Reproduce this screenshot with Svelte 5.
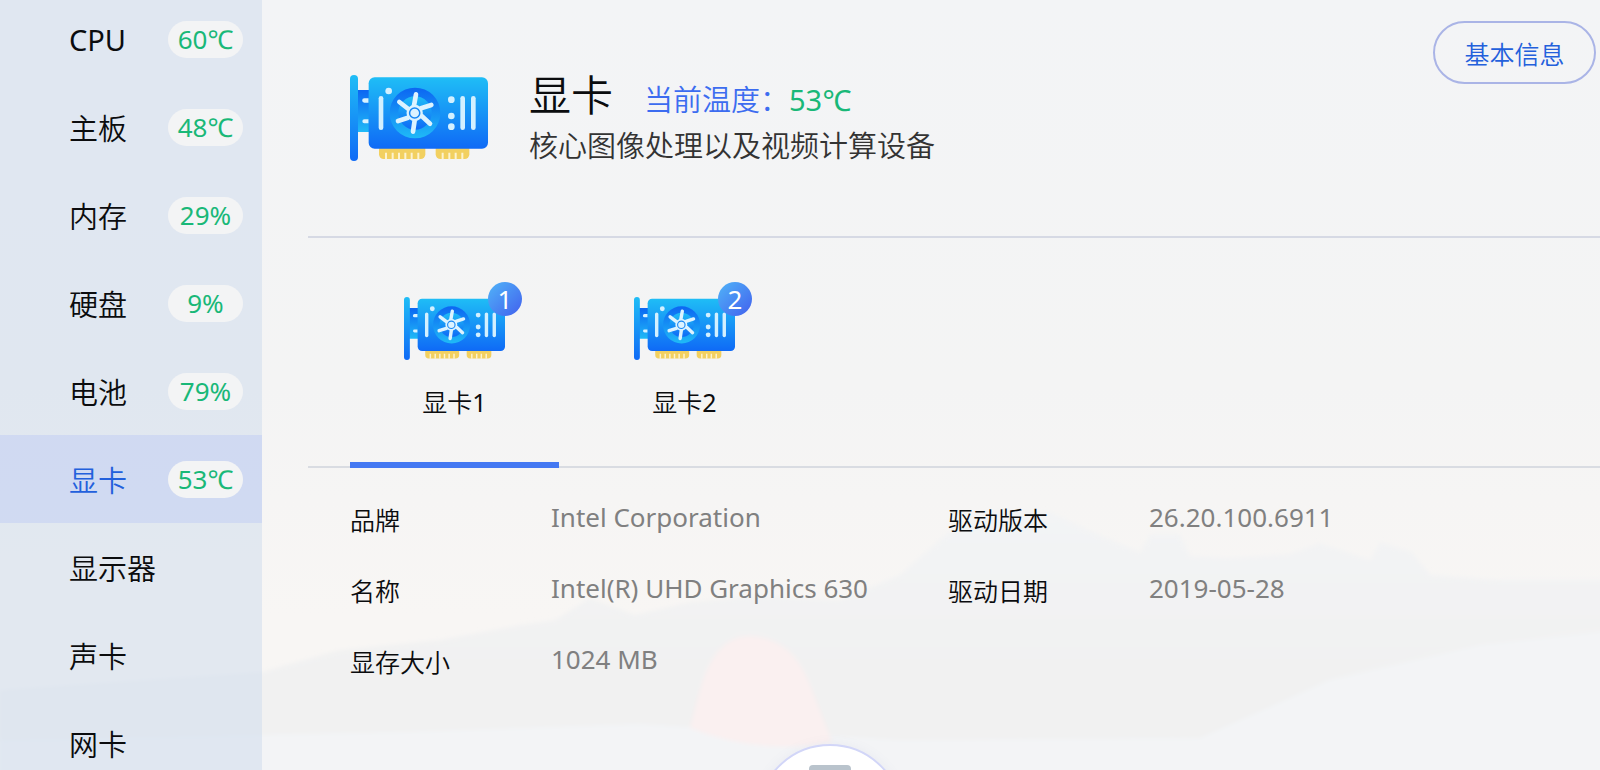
<script lang="ts">
  type Part = { name: string; reading?: string };

  const parts: Part[] = [
    { name: 'CPU', reading: '60℃' },
    { name: '主板', reading: '48℃' },
    { name: '内存', reading: '29%' },
    { name: '硬盘', reading: '9%' },
    { name: '电池', reading: '79%' },
    { name: '显卡', reading: '53℃' },
    { name: '显示器' },
    { name: '声卡' },
    { name: '网卡' },
  ];

  const cards = [1, 2];

  const details = [
    { label: '品牌', value: 'Intel Corporation' },
    { label: '驱动版本', value: '26.20.100.6911' },
    { label: '名称', value: 'Intel(R) UHD Graphics 630' },
    { label: '驱动日期', value: '2019-05-28' },
    { label: '显存大小', value: '1024 MB' },
  ];

  let activePart = $state('显卡');
  let activeCard = $state(1);

  // the light weight is too thin for latin text
  const isLatin = (text: string) => /^\w+$/.test(text);
</script>

{#snippet cardIcon(id: string)}
  <svg class="card-icon" viewBox="30 45 414 258" aria-hidden="true">
    <defs>
      <linearGradient id="{id}-body" x1="0" y1="0" x2="0" y2="1">
        <stop offset="0" stop-color="#1fbdf6" />
        <stop offset="1" stop-color="#0f6af6" />
      </linearGradient>
      <linearGradient id="{id}-deep" x1="0" y1="0" x2="0" y2="1">
        <stop offset="0" stop-color="#0c66f2" />
        <stop offset="1" stop-color="#1fbaf7" />
      </linearGradient>
    </defs>
    <rect x="50" y="90" width="44" height="126" fill="url(#{id}-deep)" />
    <path d="M86 115h-13a6.500 6.500 0 0 0 0 13h13zM86 178h-13a6 6 0 0 0 0 12h13z" fill="#d8f2ff" />
    <rect x="30" y="45" width="24" height="258" rx="12" fill="url(#{id}-body)" />
    <path d="M117 262h139v21a14 14 0 0 1-14 14H131a14 14 0 0 1-14-14z" fill="#f2d060" />
    <path d="M287 262h101v21a14 14 0 0 1-14 14h-73a14 14 0 0 1-14-14z" fill="#f2d060" />
    <path
      d="M138 278v20M158 278v20M177 278v20M196 278v20M215 278v20M235 278v20M308 278v20M328 278v20M347 278v20M367 278v20"
      stroke="#fdf3cf"
      stroke-width="6"
    />
    <rect x="86" y="52" width="358" height="214" rx="18" fill="url(#{id}-body)" />
    <g fill="#d3f0ff">
      <rect x="116" y="108" width="14" height="102" rx="7" />
      <rect x="361" y="108" width="14" height="102" rx="7" />
      <rect x="393" y="108" width="14" height="102" rx="7" />
      <circle cx="146" cy="93" r="10" />
      <circle cx="334" cy="119" r="10" />
      <circle cx="334" cy="168" r="10" />
      <circle cx="334" cy="200" r="10" />
    </g>
    <circle cx="225" cy="159" r="76" fill="url(#{id}-deep)" />
    <circle cx="225" cy="159" r="50" fill="url(#{id}-body)" />
    <path
      d="M222 137l6-34M243 145l31-10M246 169l24 22M224 181l-5 34M204 173l-30 10M205 147l-27-21"
      stroke="#ddf3ff"
      stroke-width="14"
      stroke-linecap="round"
    />
    <circle cx="224" cy="159" r="21" fill="#1787f5" stroke="#ddf3ff" stroke-width="7" />
    <circle cx="224" cy="159" r="13" fill="#ddf3ff" />
  </svg>
{/snippet}

<div class="app">
  <svg class="scenery" viewBox="0 0 1600 770" preserveAspectRatio="none" aria-hidden="true">
    <defs>
      <linearGradient id="sky" x1="0" y1="0" x2="0" y2="1">
        <stop offset="0" stop-color="#f3f4f6" />
        <stop offset="0.5" stop-color="#f4f4f4" />
        <stop offset="0.8" stop-color="#f8f6f4" />
      </linearGradient>
      <linearGradient id="ridge" x1="0" y1="0" x2="0" y2="1">
        <stop offset="0" stop-color="#f3f4f5" />
        <stop offset="0.7" stop-color="#f1f1f1" />
      </linearGradient>
      <filter id="soft"><feGaussianBlur stdDeviation="2" /></filter>
    </defs>
    <rect width="1600" height="770" fill="url(#sky)" />
    <g filter="url(#soft)">
      <path
        d="M0 690L262 672L340 650L440 640L520 625L555 620L590 598L635 615L690 602L760 596L840 600L900 575L945 535L1000 510L1050 512L1100 535L1140 552L1150 534L1180 534L1190 556L1230 558L1290 554L1320 543L1370 560L1380 542L1412 552L1430 575L1500 580L1620 580V780H0z"
        fill="url(#ridge)"
      />
      <path d="M0 740L400 732L640 724L900 740L1200 738L1330 680L1480 645L1620 630V780H0z" fill="#f3f4f6" />
      <path d="M700 690Q715 636 750 636Q790 638 808 680L832 742Q760 756 690 728z" fill="#faf0f0" />
    </g>
  </svg>

  <nav class="sidebar">
    {#each parts as part}
      <button
        class="part"
        class:active={part.name === activePart}
        onclick={() => (activePart = part.name)}
      >
        <span class:latin={isLatin(part.name)}>{part.name}</span>
        {#if part.reading}
          <span class="reading">{part.reading}</span>
        {/if}
      </button>
    {/each}
  </nav>

  <main>
    <header>
      {@render cardIcon('main')}
      <div class="heading">
        <div class="title-row">
          <h1>显卡</h1>
          <p class="temperature">当前温度：<span>53℃</span></p>
        </div>
        <p class="summary">核心图像处理以及视频计算设备</p>
      </div>
      <button class="basic-info">基本信息</button>
    </header>

    <div class="tabs">
      {#each cards as card}
        <button class="tab" class:active={card === activeCard} onclick={() => (activeCard = card)}>
          <span class="thumb">
            {@render cardIcon(`card${card}`)}
            <span class="badge">{card}</span>
          </span>
          <span>显卡<span class="latin">{card}</span></span>
        </button>
      {/each}
    </div>

    <dl class="details">
      {#each details as item}
        <div class="detail">
          <dt>{item.label}</dt>
          <dd>{item.value}</dd>
        </div>
      {/each}
    </dl>
  </main>

  <button class="dock" aria-label="设备">
    <span class="dock-glyph"></span>
  </button>
</div>

<style>
  :global(body) {
    background: #f3f4f5;
  }

  .app {
    position: relative;
    display: flex;
    height: 100vh;
    overflow: hidden;
    font-family: 'Noto Sans', 'Noto Sans CJK SC', sans-serif;
    font-weight: 350;
    color: #0b0c0e;
  }

  .scenery {
    position: absolute;
    inset: 0;
    width: 100%;
    height: 100%;
  }

  button {
    background: none;
    border: none;
    padding: 0;
    font: inherit;
    color: inherit;
    cursor: pointer;
  }

  h1,
  p,
  dl,
  dd {
    margin: 0;
    font-weight: inherit;
  }

  .latin {
    font-weight: 400;
  }

  .sidebar {
    position: relative;
    flex: 0 0 262px;
    display: flex;
    flex-direction: column;
    margin-top: -5px;
    background: rgba(208, 221, 238, 0.56);
  }

  .part {
    flex: 0 0 88px;
    display: flex;
    justify-content: space-between;
    align-items: center;
    padding: 0 19px 0 69px;
    font-size: 29px;
  }

  .part.active {
    background: rgba(190, 203, 244, 0.48);
    color: #2360dc;
  }

  .reading {
    width: 75px;
    border-radius: 19px;
    background: #f3f4f5;
    color: #19b878;
    font-size: 26px;
    font-weight: 400;
    line-height: 37px;
    text-align: center;
  }

  main {
    position: relative;
    flex: 1;
    min-width: 0;
    padding-left: 46px;
  }

  header {
    display: flex;
    align-items: flex-start;
    height: 238px;
    box-sizing: border-box;
    padding: 21px 4px 0 42px;
    border-bottom: 2px solid #d6d9e4;
  }

  header :global(.card-icon) {
    width: 138px;
    height: 86px;
    margin-top: 54px;
  }

  .heading {
    flex: 1;
    margin: 47px 0 0 41px;
  }

  .title-row {
    display: flex;
    align-items: baseline;
    gap: 31px;
  }

  h1 {
    font-size: 42px;
    line-height: 54px;
  }

  .temperature {
    font-size: 29px;
    line-height: 40px;
    color: #3c6cf0;
  }

  .temperature span {
    color: #19b878;
    font-weight: 400;
  }

  .summary {
    font-size: 29px;
    line-height: 48px;
    color: #333;
  }

  .basic-info {
    box-sizing: border-box;
    width: 163px;
    height: 63px;
    border: 2px solid #aab4e6;
    border-radius: 32px;
    color: #2360dc;
    font-size: 25px;
  }

  .tabs {
    display: flex;
    gap: 21px;
    height: 230px;
    box-sizing: border-box;
    padding-left: 42px;
    border-bottom: 2px solid #d9dce2;
  }

  .tab {
    width: 209px;
    display: flex;
    flex-direction: column;
    align-items: center;
    justify-content: flex-start;
    gap: 24px;
    padding-top: 59px;
    font-size: 25px;
    line-height: 36px;
    box-sizing: border-box;
    margin-bottom: -2px;
    border-bottom: 6px solid transparent;
  }

  .tab.active {
    border-bottom-color: #4478f2;
  }

  .thumb {
    position: relative;
    display: flex;
  }

  .thumb :global(.card-icon) {
    width: 101px;
    height: 63px;
  }

  .badge {
    position: absolute;
    top: -15px;
    right: -17px;
    width: 34px;
    height: 34px;
    border-radius: 50%;
    background: linear-gradient(135deg, #50b4f8, #4260ee);
    color: #fff;
    font-size: 26px;
    font-weight: 400;
    line-height: 34px;
    text-align: center;
  }

  .details {
    display: grid;
    grid-template-columns: 598px 1fr;
    padding: 15px 0 0 42px;
  }

  .detail {
    display: flex;
    height: 71px;
    align-items: center;
  }

  dt {
    width: 201px;
    font-size: 25px;
  }

  dd {
    font-size: 26px;
    font-weight: 400;
    padding-bottom: 4px;
    color: #808080;
    white-space: nowrap;
  }

  .dock {
    position: absolute;
    left: calc(50% - 43px);
    bottom: -120px;
    width: 146px;
    height: 146px;
    display: flex;
    justify-content: center;
    border: 2px solid #d2d6f8;
    border-radius: 50%;
    background: #fff;
    box-sizing: border-box;
    box-shadow: 0 0 12px rgba(120, 130, 180, 0.08);
  }

  .dock-glyph {
    width: 42px;
    height: 60px;
    margin-top: 19px;
    border-radius: 4px;
    background: #b9c3cc;
  }
</style>
